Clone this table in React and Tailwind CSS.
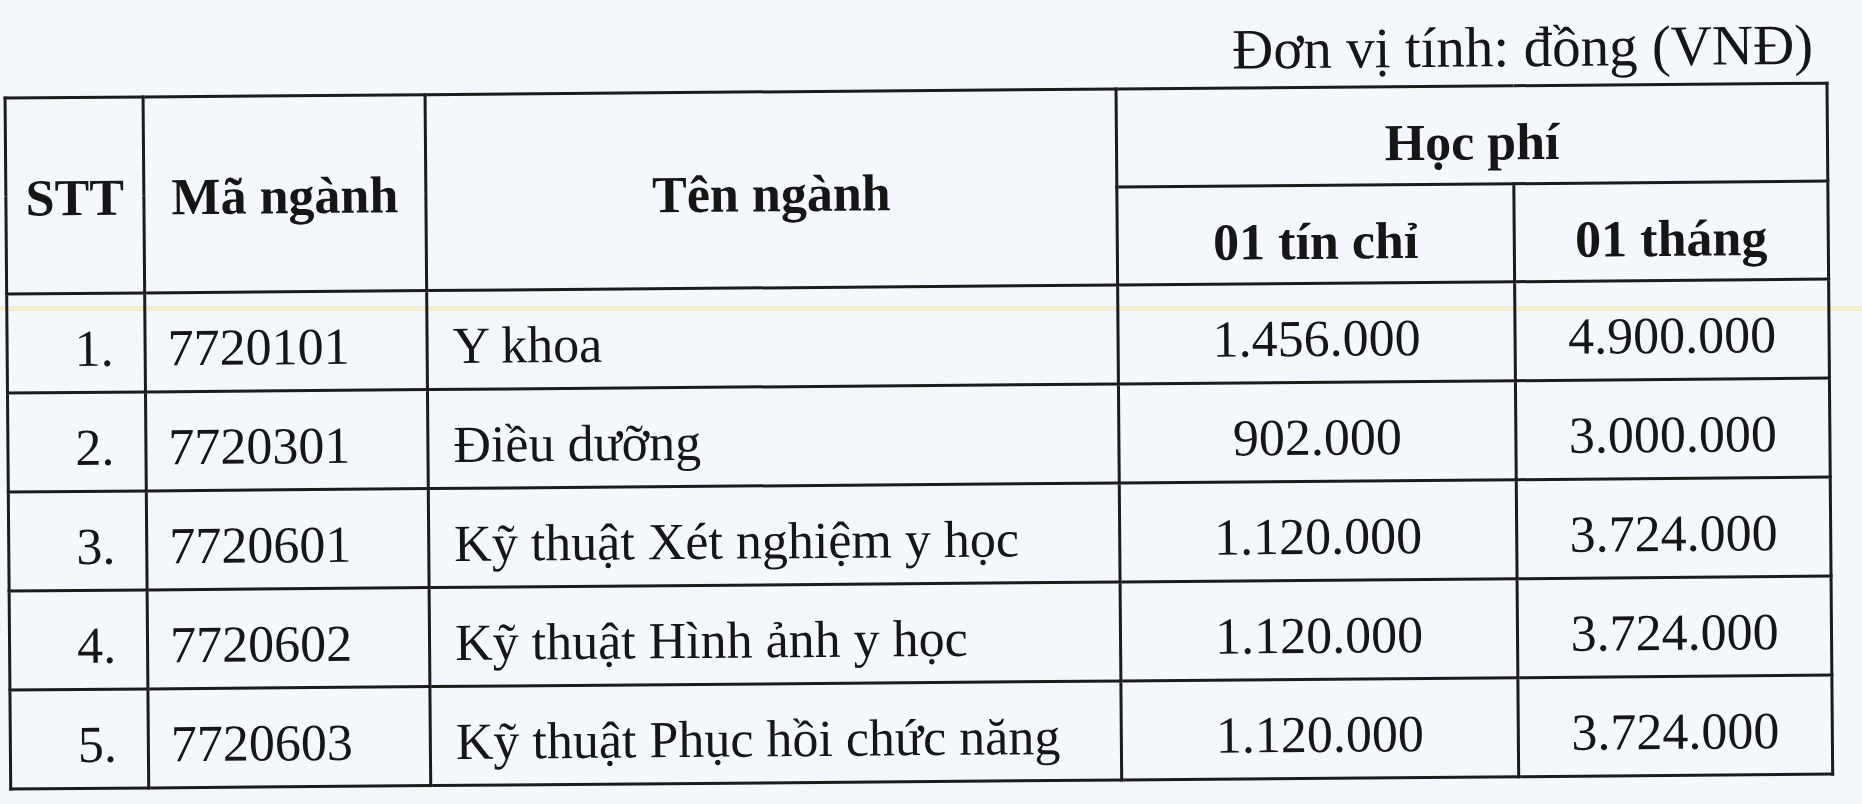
const rows = [
  ["1.", "7720101", "Y khoa", "1.456.000", "4.900.000"],
  ["2.", "7720301", "Điều dưỡng", "902.000", "3.000.000"],
  ["3.", "7720601", "Kỹ thuật Xét nghiệm y học", "1.120.000", "3.724.000"],
  ["4.", "7720602", "Kỹ thuật Hình ảnh y học", "1.120.000", "3.724.000"],
  ["5.", "7720603", "Kỹ thuật Phục hồi chức năng", "1.120.000", "3.724.000"],
];

export default function App() {
  return (
    <div className="h-[804px] w-[1862px] overflow-hidden bg-[#f4f7fb] bg-[linear-gradient(to_bottom,transparent_306px,#f1edcf_306px,#f1edcf_311px,transparent_311px)] font-['Liberation_Serif','Times_New_Roman',serif] text-[#161616]">
      <div className="rotate-[-0.47deg] pl-[6px] pt-[22px]">
        <p className="pr-[46px] text-right text-[57px] leading-[60px]">Đơn vị tính: đồng (VNĐ)</p>

        <table className="mt-[7px] w-[1822px] table-fixed border-collapse border-[3px] border-[#1c1c1c] text-[52px] leading-[60px]">
          <colgroup>
            <col className="w-[138px]" />
            <col className="w-[282px]" />
            <col className="w-[691px]" />
            <col className="w-[397px]" />
            <col className="w-[314px]" />
          </colgroup>
          <thead className="font-bold">
            <tr className="h-[98px]">
              <th rowSpan={2} className="border-[3px] border-[#1c1c1c] pt-[4px] text-center align-middle">
                STT
              </th>
              <th rowSpan={2} className="border-[3px] border-[#1c1c1c] pt-[4px] text-center align-middle">
                Mã ngành
              </th>
              <th rowSpan={2} className="border-[3px] border-[#1c1c1c] pt-[8px] text-center align-middle">
                Tên ngành
              </th>
              <th colSpan={2} className="border-[3px] border-[#1c1c1c] pt-[14px] text-center align-middle">
                Học phí
              </th>
            </tr>
            <tr className="h-[98px]">
              <th className="border-[3px] border-[#1c1c1c] pt-[14px] text-center align-middle">01 tín chỉ</th>
              <th className="border-[3px] border-[#1c1c1c] pt-[14px] text-center align-middle">01 tháng</th>
            </tr>
          </thead>
          <tbody>
            {rows.map((r) => (
              <tr key={r[0]} className="h-[99px]">
                <td className="border-[3px] border-[#1c1c1c] pr-[30px] pt-[12px] text-right align-middle">{r[0]}</td>
                <td className="border-[3px] border-[#1c1c1c] pl-[21px] pt-[12px] text-left align-middle">{r[1]}</td>
                <td className="border-[3px] border-[#1c1c1c] pl-[24px] pt-[12px] text-left align-middle">{r[2]}</td>
                <td className="border-[3px] border-[#1c1c1c] pt-[12px] text-center align-middle">{r[3]}</td>
                <td className="border-[3px] border-[#1c1c1c] pt-[12px] text-center align-middle">{r[4]}</td>
              </tr>
            ))}
          </tbody>
        </table>
      </div>
    </div>
  );
}
